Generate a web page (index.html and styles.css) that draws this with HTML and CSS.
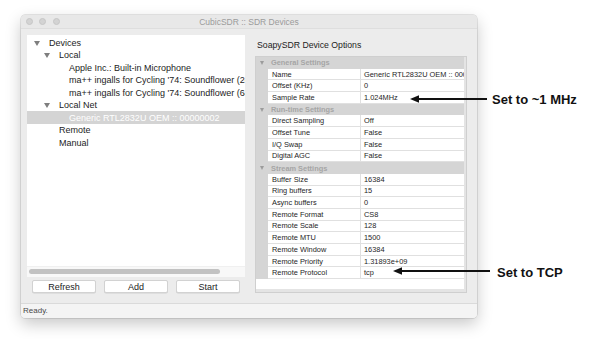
FILE: index.html
```html
<!DOCTYPE html>
<html>
<head>
<meta charset="utf-8">
<title>CubicSDR :: SDR Devices</title>
<link rel="stylesheet" href="styles.css">
</head>
<body>
<div class="window">
  <div class="titlebar">
    <div class="lights"><span class="light"></span><span class="light"></span><span class="light"></span></div>
    <div class="title">CubicSDR :: SDR Devices</div>
    <div></div>
  </div>
  <div class="main">
    <div class="left">
      <div class="tree">
        <div class="rows">
          <div class="node lv0"><span class="tri"></span>Devices</div>
          <div class="node lv1"><span class="tri"></span>Local</div>
          <div class="node leaf2">Apple Inc.: Built-in Microphone</div>
          <div class="node leaf2">ma++ ingalls for Cycling '74: Soundflower (2ch)</div>
          <div class="node leaf2">ma++ ingalls for Cycling '74: Soundflower (64ch)</div>
          <div class="node lv1"><span class="tri"></span>Local Net</div>
          <div class="node leaf2 selected">Generic RTL2832U OEM :: 00000002</div>
          <div class="node leaf1">Remote</div>
          <div class="node leaf1">Manual</div>
        </div>
        <div class="hscroll"><div class="thumb"></div></div>
      </div>
      <div class="buttons">
        <button class="btn">Refresh</button>
        <button class="btn">Add</button>
        <button class="btn">Start</button>
      </div>
    </div>
    <div class="right">
      <div class="panel-title">SoapySDR Device Options</div>
      <div class="grid">
        <div class="section"><span class="stri"></span>General Settings</div>
        <div class="prop"><span class="gut"></span><span class="name">Name</span><span class="val">Generic RTL2832U OEM :: 00000002</span></div>
        <div class="prop"><span class="gut"></span><span class="name">Offset (KHz)</span><span class="val">0</span></div>
        <div class="prop"><span class="gut"></span><span class="name">Sample Rate</span><span class="val">1.024MHz</span></div>
        <div class="section"><span class="stri"></span>Run-time Settings</div>
        <div class="prop"><span class="gut"></span><span class="name">Direct Sampling</span><span class="val">Off</span></div>
        <div class="prop"><span class="gut"></span><span class="name">Offset Tune</span><span class="val">False</span></div>
        <div class="prop"><span class="gut"></span><span class="name">I/Q Swap</span><span class="val">False</span></div>
        <div class="prop"><span class="gut"></span><span class="name">Digital AGC</span><span class="val">False</span></div>
        <div class="section"><span class="stri"></span>Stream Settings</div>
        <div class="prop"><span class="gut"></span><span class="name">Buffer Size</span><span class="val">16384</span></div>
        <div class="prop"><span class="gut"></span><span class="name">Ring buffers</span><span class="val">15</span></div>
        <div class="prop"><span class="gut"></span><span class="name">Async buffers</span><span class="val">0</span></div>
        <div class="prop"><span class="gut"></span><span class="name">Remote Format</span><span class="val">CS8</span></div>
        <div class="prop"><span class="gut"></span><span class="name">Remote Scale</span><span class="val">128</span></div>
        <div class="prop"><span class="gut"></span><span class="name">Remote MTU</span><span class="val">1500</span></div>
        <div class="prop"><span class="gut"></span><span class="name">Remote Window</span><span class="val">16384</span></div>
        <div class="prop"><span class="gut"></span><span class="name">Remote Priority</span><span class="val">1.31893e+09</span></div>
        <div class="prop"><span class="gut"></span><span class="name">Remote Protocol</span><span class="val">tcp</span></div>
        <div class="filler"></div>
      </div>
    </div>
  </div>
  <div class="status">Ready.</div>
</div>

<div class="note note1">Set to ~1 MHz</div>
<div class="note note2">Set to TCP</div>
<svg class="arrows" width="600" height="339" viewBox="0 0 600 339">
  <line x1="487" y1="99" x2="416" y2="99" stroke="#111" stroke-width="2"/>
  <polygon points="410,99 419,95.3 419,102.7" fill="#111"/>
  <line x1="490" y1="271" x2="399" y2="271" stroke="#111" stroke-width="2"/>
  <polygon points="393,271 402,267.3 402,274.7" fill="#111"/>
</svg>
</body>
</html>
```

FILE: styles.css
```css
* { box-sizing: border-box; }

body {
  margin: 0;
  padding: 15px 0 0 21px;
  width: 600px;
  height: 339px;
  overflow: hidden;
  position: relative;
  background: #ffffff;
  font-family: "Liberation Sans", Arial, sans-serif;
  color: #1c1c1c;
}

.window {
  width: 456px;
  height: 303px;
  background: #ececec;
  border-radius: 4px;
  box-shadow: 0 0 0 0.5px rgba(0, 0, 0, 0.18), 0 6px 16px rgba(0, 0, 0, 0.22);
  display: flex;
  flex-direction: column;
  overflow: hidden;
}

/* title bar */
.titlebar {
  height: 14px;
  flex: 0 0 14px;
  display: grid;
  grid-template-columns: 1fr auto 1fr;
  align-items: center;
  background: #e8e8e8;
  border-bottom: 1px solid #dedede;
}

.lights {
  display: flex;
  gap: 6.5px;
  padding-left: 4.5px;
}

.light {
  width: 7px;
  height: 7px;
  border-radius: 50%;
  background: #d3d3d3;
  border: 0.5px solid #c6c6c6;
}

.title {
  font-size: 8.5px;
  color: #9b9b9b;
  white-space: nowrap;
}

/* main */
.main {
  flex: 1;
  display: flex;
  gap: 10px;
  padding: 6px 10px 10px 6px;
  min-height: 0;
}

.left {
  width: 218px;
  display: flex;
  flex-direction: column;
}

.tree {
  flex: 1;
  background: #ffffff;
  display: flex;
  flex-direction: column;
  overflow: hidden;
}

.rows {
  flex: 1;
  padding-top: 1.8px;
}

.node {
  height: 12.45px;
  display: flex;
  align-items: center;
  font-size: 9px;
  white-space: nowrap;
  overflow: hidden;
  color: #1c1c1c;
}

.node.lv0 { padding-left: 7px; }
.node.lv1 { padding-left: 17px; }
.node.leaf1 { padding-left: 32px; }
.node.leaf2 { padding-left: 42px; }

.node.selected {
  background: #d4d4d4;
  color: #ffffff;
}

.tri {
  width: 0;
  height: 0;
  border-left: 3px solid transparent;
  border-right: 3px solid transparent;
  border-top: 5px solid #7f7f7f;
  margin-right: 9px;
  flex: none;
}

.hscroll {
  height: 11px;
  flex: none;
  background: #f8f8f8;
  border-top: 1px solid #f0f0f0;
  padding: 2px 0 0 2px;
}

.thumb {
  width: 191px;
  height: 5px;
  border-radius: 3px;
  background: #c2c2c2;
}

.buttons {
  height: 13px;
  margin-top: 3px;
  display: flex;
  gap: 8px;
  padding: 0 5px;
}

.btn {
  flex: 1;
  height: 13px;
  margin: 0;
  padding: 0;
  background: #ffffff;
  border: 0.5px solid #d2d2d2;
  border-radius: 2px;
  box-shadow: 0 0.5px 0 rgba(0, 0, 0, 0.12);
  font-family: "Liberation Sans", Arial, sans-serif;
  font-size: 9px;
  color: #1c1c1c;
  line-height: 12px;
}

/* right */
.right {
  width: 212px;
  display: flex;
  flex-direction: column;
}

.panel-title {
  height: 21px;
  flex: none;
  padding-left: 2px;
  font-size: 8.7px;
  line-height: 20px;
  color: #1c1c1c;
  white-space: nowrap;
}

.grid {
  flex: 1;
  background: #e4e4e4;
  border: 1px solid #cfcfcf;
  padding-right: 2px;
  font-size: 7.4px;
  overflow: hidden;
}

.section {
  height: 11.7px;
  display: flex;
  align-items: center;
  padding-left: 3px;
  background: #d5d5d5;
  color: #a5a5a5;
  font-weight: bold;
  white-space: nowrap;
}

.stri {
  width: 0;
  height: 0;
  border-left: 2.5px solid transparent;
  border-right: 2.5px solid transparent;
  border-top: 4px solid #9c9c9c;
  margin: 0 7px 0 1px;
  flex: none;
}

.prop {
  height: 11.7px;
  display: grid;
  grid-template-columns: 12px 93px 1fr;
}

.gut {
  background: #d5d5d5;
}

.name,
.val {
  background: #ffffff;
  border-bottom: 1px solid #e0e0e0;
  display: flex;
  align-items: center;
  white-space: nowrap;
  overflow: hidden;
  color: #1e1e1e;
}

.name {
  padding-left: 4px;
  border-right: 1px solid #e0e0e0;
}

.val {
  padding-left: 3px;
}

.filler {
  height: 10px;
  background: #ffffff;
}

/* status bar */
.status {
  height: 15px;
  flex: 0 0 15px;
  background: #f4f4f4;
  border-top: 1px solid #dadada;
  font-size: 8px;
  line-height: 14px;
  padding-left: 2px;
  color: #4a4a4a;
}

/* annotations */
.note {
  position: absolute;
  font-size: 13px;
  font-weight: bold;
  line-height: 16px;
  color: #111111;
  white-space: nowrap;
}

.note1 { left: 492px; top: 92px; }
.note2 { left: 497px; top: 265px; }

.arrows {
  position: absolute;
  left: 0;
  top: 0;
  pointer-events: none;
}
```
